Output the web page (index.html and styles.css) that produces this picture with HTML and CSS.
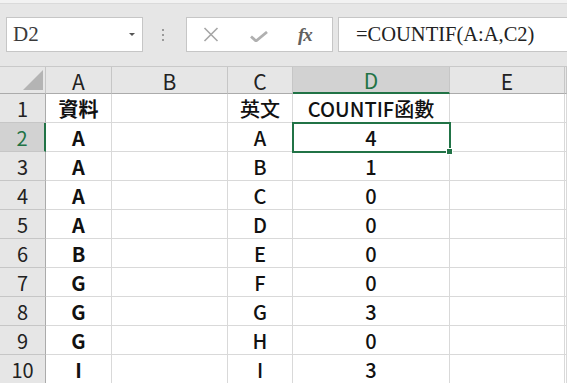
FILE: index.html
```html
<!DOCTYPE html>
<html lang="zh-Hant">
<head>
    <meta charset="UTF-8">
    <meta name="viewport" content="width=device-width, initial-scale=1.0">
    <title>COUNTIF</title>
    <link rel="stylesheet" href="styles.css">
</head>
<body>
    <div class="toolbar">
        <div class="namebox">
            <span class="ref">D2</span>
            <span class="arrow"></span>
        </div>
        <div class="grip"><i></i><i></i><i></i></div>
        <div class="fxbox">
            <svg class="icon-x" width="16" height="15" viewBox="0 0 16 15">
                <path d="M1.5 1 L14.5 14 M14.5 1 L1.5 14" stroke="#a6a6a6" stroke-width="1.6" fill="none"/>
            </svg>
            <svg class="icon-check" width="18" height="11" viewBox="0 0 18 11">
                <path d="M1 5.5 L6 10 L17 1" stroke="#b0b0b0" stroke-width="2.8" fill="none"/>
            </svg>
            <span class="fx">fx</span>
        </div>
        <div class="formula">=COUNTIF(A:A,C2)</div>
    </div>

    <div class="sheet">
        <div class="corner"><span class="tri"></span></div>
        <div class="colhead">A</div>
        <div class="colhead">B</div>
        <div class="colhead">C</div>
        <div class="colhead active">D</div>
        <div class="colhead">E</div>
        <div class="colhead"></div>

        <div class="rowhead">1</div>
        <div class="cell col-a">資料</div>
        <div class="cell"></div>
        <div class="cell">英文</div>
        <div class="cell">COUNTIF函數</div>
        <div class="cell"></div>
        <div class="cell"></div>

        <div class="rowhead active">2</div>
        <div class="cell col-a">A</div>
        <div class="cell"></div>
        <div class="cell">A</div>
        <div class="cell selected">4<span class="handle"></span></div>
        <div class="cell"></div>
        <div class="cell"></div>

        <div class="rowhead">3</div>
        <div class="cell col-a">A</div>
        <div class="cell"></div>
        <div class="cell">B</div>
        <div class="cell">1</div>
        <div class="cell"></div>
        <div class="cell"></div>

        <div class="rowhead">4</div>
        <div class="cell col-a">A</div>
        <div class="cell"></div>
        <div class="cell">C</div>
        <div class="cell">0</div>
        <div class="cell"></div>
        <div class="cell"></div>

        <div class="rowhead">5</div>
        <div class="cell col-a">A</div>
        <div class="cell"></div>
        <div class="cell">D</div>
        <div class="cell">0</div>
        <div class="cell"></div>
        <div class="cell"></div>

        <div class="rowhead">6</div>
        <div class="cell col-a">B</div>
        <div class="cell"></div>
        <div class="cell">E</div>
        <div class="cell">0</div>
        <div class="cell"></div>
        <div class="cell"></div>

        <div class="rowhead">7</div>
        <div class="cell col-a">G</div>
        <div class="cell"></div>
        <div class="cell">F</div>
        <div class="cell">0</div>
        <div class="cell"></div>
        <div class="cell"></div>

        <div class="rowhead">8</div>
        <div class="cell col-a">G</div>
        <div class="cell"></div>
        <div class="cell">G</div>
        <div class="cell">3</div>
        <div class="cell"></div>
        <div class="cell"></div>

        <div class="rowhead">9</div>
        <div class="cell col-a">G</div>
        <div class="cell"></div>
        <div class="cell">H</div>
        <div class="cell">0</div>
        <div class="cell"></div>
        <div class="cell"></div>

        <div class="rowhead">10</div>
        <div class="cell col-a">I</div>
        <div class="cell"></div>
        <div class="cell">I</div>
        <div class="cell">3</div>
        <div class="cell"></div>
        <div class="cell"></div>
    </div>
</body>
</html>
```

FILE: styles.css
```css
body {
    margin: 0;
    width: 567px;
    height: 383px;
    overflow: hidden;
    background: #fff;
    font-family: "Noto Sans CJK TC", "Noto Sans", sans-serif;
}

/* formula bar */
.toolbar {
    height: 66px;
    box-sizing: border-box;
    background: #e6e6e6;
    border-top: 3px solid #f2f2f2;
    box-shadow: inset 0 1px 0 #dadada;
    padding-top: 14px;
    display: flex;
    align-items: flex-start;
}
.namebox {
    margin-left: 6px;
    width: 137px;
    height: 35px;
    box-sizing: border-box;
    background: #fff;
    border: 1px solid #c6c6c6;
    display: flex;
    align-items: center;
    padding: 0 7px 0 6px;
}
.ref {
    font-family: "Liberation Serif", serif;
    font-size: 21px;
    color: #3a3a3a;
}
.arrow {
    margin-left: auto;
    width: 0;
    height: 0;
    border-left: 3.5px solid transparent;
    border-right: 3.5px solid transparent;
    border-top: 3.5px solid #555;
}
.grip {
    margin-left: 19px;
    width: 2px;
    height: 35px;
    display: flex;
    flex-direction: column;
    justify-content: center;
    gap: 3px;
}
.grip i {
    display: block;
    width: 2px;
    height: 2px;
    background: #9a9a9a;
}
.fxbox {
    margin-left: 22px;
    width: 147px;
    height: 35px;
    box-sizing: border-box;
    background: #fff;
    border: 1px solid #c6c6c6;
    display: flex;
    align-items: center;
    padding-left: 16px;
}
.icon-check {
    margin-left: 31px;
    margin-top: 4px;
}
.fx {
    margin-left: 30px;
    font-family: "Liberation Serif", serif;
    font-style: italic;
    font-weight: bold;
    font-size: 19px;
    color: #606060;
    letter-spacing: -1px;
}
.formula {
    margin-left: 5px;
    flex: 1;
    height: 35px;
    box-sizing: border-box;
    background: #fff;
    border: 1px solid #c6c6c6;
    border-right: none;
    padding-left: 17px;
    font-family: "Liberation Serif", serif;
    font-size: 20.5px;
    line-height: 33px;
    color: #222;
    white-space: nowrap;
}

/* sheet grid */
.sheet {
    display: grid;
    grid-template-columns: 46px 66px 116px 65px 157px 115px 1fr;
    grid-template-rows: 27px;
    grid-auto-rows: 29px;
    border-top: 1px solid #c9c9c9;
}
.sheet > div {
    box-sizing: border-box;
    display: flex;
    align-items: center;
    justify-content: center;
    white-space: nowrap;
}
.corner {
    background: #e6e6e6;
    border-right: 1px solid #c6c6c6;
    border-bottom: 1px solid #ababab;
    position: relative;
}
.tri {
    position: absolute;
    right: 2px;
    bottom: 3px;
    width: 0;
    height: 0;
    border-left: 20px solid transparent;
    border-bottom: 20px solid #b4b4b4;
}
.colhead {
    background: #e6e6e6;
    border-right: 1px solid #c6c6c6;
    border-bottom: 1px solid #ababab;
    font-size: 21px;
    color: #222;
    padding-top: 1px;
}
.colhead.active {
    background: #d2d2d2;
    color: #217346;
    border-bottom: 2px solid #217346;
}
.rowhead {
    background: #e6e6e6;
    border-right: 1px solid #ababab;
    border-bottom: 1px solid #c6c6c6;
    font-size: 20px;
    color: #222;
}
.rowhead.active {
    background: #d2d2d2;
    color: #217346;
    border-right: 2px solid #217346;
}
.cell {
    border-right: 1px solid #d9d9d9;
    border-bottom: 1px solid #d9d9d9;
    font-size: 20px;
    font-weight: 500;
    color: #111;
}
.cell.col-a {
    font-weight: bold;
}
.cell.selected {
    position: relative;
    outline: 2px solid #217346;
    outline-offset: -1px;
}
.handle {
    position: absolute;
    right: -4px;
    bottom: -4px;
    width: 5px;
    height: 5px;
    background: #217346;
    border: 1px solid #fff;
}
```
